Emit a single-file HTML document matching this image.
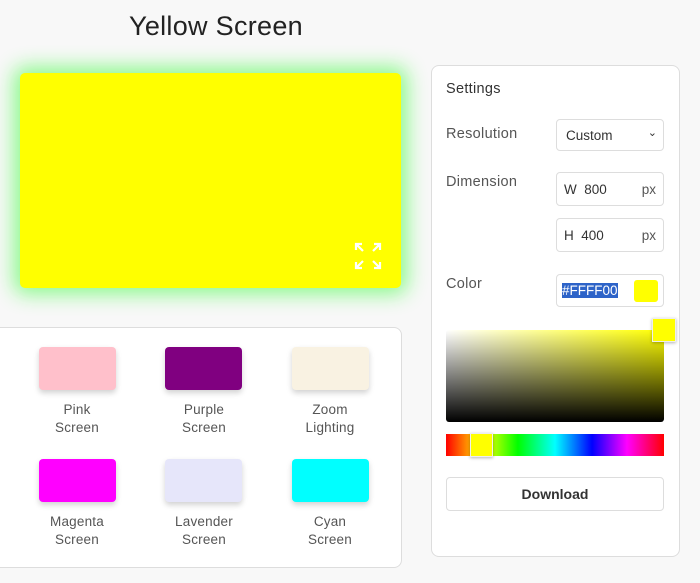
<!DOCTYPE html>
<html><head><style>
*{box-sizing:border-box;margin:0;padding:0}
body{width:700px;height:583px;background:#f8f8f8;font-family:"Liberation Sans",sans-serif;position:relative;overflow:hidden;color:#444}
.abs{position:absolute}
h1{position:absolute;left:0;width:432px;top:11px;text-align:center;font-size:27px;font-weight:normal;color:#222;letter-spacing:.3px}
.screen{left:20px;top:73px;width:381px;height:215px;background:#ff0;border-radius:5px;box-shadow:0 0 20px 6px #8afa8a}
.card{background:#fff;border:1px solid #ddd;border-radius:8px}
.sw{position:absolute;width:77px;height:43px;border-radius:4px;box-shadow:0 3px 6px rgba(0,0,0,.18)}
.lbl{position:absolute;width:120px;text-align:center;font-size:13.5px;line-height:18px;color:#555;letter-spacing:.2px}
.lab{position:absolute;left:446px;font-size:14.5px;color:#555;letter-spacing:.3px}
.inp{position:absolute;left:556px;width:108px;border:1px solid #ddd;border-radius:4px;background:#fff;font-size:13.5px;color:#333}
</style></head><body>
<h1>Yellow Screen</h1>
<div class="abs screen"></div>
<svg class="abs" style="left:354px;top:242px" width="28" height="28" viewBox="0 0 28 28" fill="none" stroke="#fff" stroke-width="2.2">
<path d="M2 8V2h6M2 2l7 7M20 2h6v6M26 2l-7 7M2 20v6h6M2 26l7-7M26 20v6h-6M26 26l-7-7"/></svg>
<div class="abs card" style="left:-10px;top:327px;width:412px;height:241px"></div>
<div class="sw" style="left:39px;top:347px;background:#ffc0cb"></div>
<div class="sw" style="left:165px;top:347px;background:#800080"></div>
<div class="sw" style="left:292px;top:347px;background:#f9f2e2"></div>
<div class="sw" style="left:39px;top:459px;background:#f0f"></div>
<div class="sw" style="left:165px;top:459px;background:#e6e6fa"></div>
<div class="sw" style="left:292px;top:459px;background:#0ff"></div>
<div class="lbl" style="left:17px;top:401px">Pink<br>Screen</div>
<div class="lbl" style="left:144px;top:401px">Purple<br>Screen</div>
<div class="lbl" style="left:270px;top:401px">Zoom<br>Lighting</div>
<div class="lbl" style="left:17px;top:513px">Magenta<br>Screen</div>
<div class="lbl" style="left:144px;top:513px">Lavender<br>Screen</div>
<div class="lbl" style="left:270px;top:513px">Cyan<br>Screen</div>

<div class="abs card" style="left:431px;top:65px;width:249px;height:492px"></div>
<div class="lab" style="top:81px;color:#333">Settings</div>
<div class="lab" style="top:126px">Resolution</div>
<div class="lab" style="top:174px">Dimension</div>
<div class="lab" style="top:276px">Color</div>
<div class="inp" style="top:119px;height:32px;padding:8px 9px">Custom<span style="position:absolute;right:6px;top:6px;font-size:11px">&#8964;</span></div>
<div class="inp" style="top:172px;height:34px;padding:9px 7px">W&nbsp; 800<span style="position:absolute;right:7px;top:9px;color:#555">px</span></div>
<div class="inp" style="top:218px;height:34px;padding:9px 7px">H&nbsp; 400<span style="position:absolute;right:7px;top:9px;color:#555">px</span></div>
<div class="inp" style="top:274px;height:33px;padding:8px 5px"><span style="background:#2d63c8;color:#fff">#FFFF00</span><span style="position:absolute;right:5px;top:5px;width:24px;height:22px;background:#ff0;border-radius:3px"></span></div>
<div class="abs" style="left:446px;top:330px;width:218px;height:92px;border-radius:3px;background:linear-gradient(to top,#000,rgba(0,0,0,0)),linear-gradient(to right,#fff,#ff0)"></div>
<div class="abs" style="left:652px;top:318px;width:24px;height:24px;background:#ff0;border:1px solid #eee;box-shadow:0 1px 3px rgba(0,0,0,.3)"></div>
<div class="abs" style="left:446px;top:434px;width:218px;height:22px;background:linear-gradient(to right,#f00,#ff0 17%,#0f0 33%,#0ff 50%,#00f 67%,#f0f 83%,#f00)"></div>
<div class="abs" style="left:470px;top:433px;width:23px;height:24px;background:#ff0;border:1px solid #eee;box-shadow:0 1px 3px rgba(0,0,0,.3)"></div>
<div class="abs" style="left:446px;top:477px;width:218px;height:34px;border:1px solid #ddd;border-radius:4px;text-align:center;line-height:32px;font-size:14px;font-weight:bold;color:#333">Download</div>
</body></html>
